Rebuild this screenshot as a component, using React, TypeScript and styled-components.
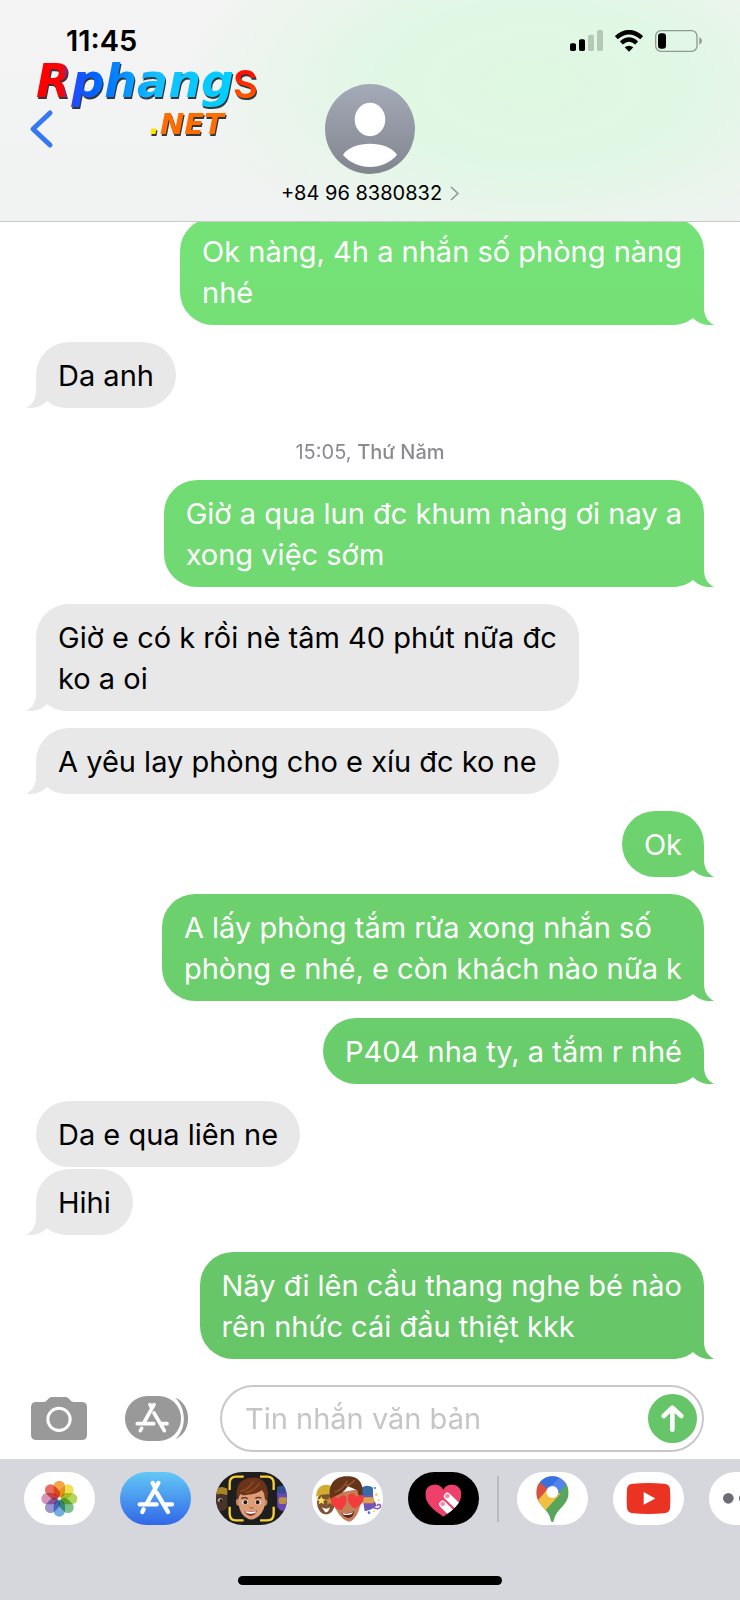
import React from "react";
import styled, { createGlobalStyle, css } from "styled-components";

const GlobalStyle = createGlobalStyle`
  * { box-sizing: border-box; }
  body {
    margin: 0;
    background: #fff;
    color: #000;
    font-family: Inter, "Noto Sans", sans-serif;
  }
  button { border: 0; padding: 0; background: none; font: inherit; color: inherit; cursor: pointer; }
  svg { display: block; }
`;

const Page = styled.div`
  display: flex;
  flex-direction: column;
  min-height: 100vh;
  overflow-x: hidden;
`;

const Header = styled.header`
  position: relative;
  z-index: 1;
  padding-bottom: 16px;
  border-bottom: 1px solid #c8cac9;
  background:
    radial-gradient(ellipse 48% 85% at 72% 38%, #dff8e1 0%, #e1f7e5 45%, rgba(232, 245, 234, 0.7) 75%, rgba(240, 243, 241, 0) 100%),
    linear-gradient(#f4f4f4, #f1f2f2);
`;

const StatusBar = styled.div`
  display: flex;
  justify-content: space-between;
  align-items: center;
  height: 84px;
  padding: 0 38px 3px 66px;
`;

const Clock = styled.time`
  font-size: 29px;
  font-weight: 600;
  line-height: 32px;
`;

const StatusIcons = styled.div`
  display: flex;
  align-items: center;
  gap: 12px;
`;

const NavBar = styled.div`
  display: grid;
  grid-template-columns: 1fr auto 1fr;
`;

const BackButton = styled.button`
  justify-self: start;
  align-self: start;
  height: 90px;
  padding: 0 29px;
`;

const Contact = styled.button`
  display: flex;
  flex-direction: column;
  align-items: center;
  gap: 8px;
`;

const ContactName = styled.span`
  display: flex;
  align-items: center;
  gap: 8px;
  font-size: 20px;
  line-height: 23px;
`;

const Watermark = styled.div`
  position: absolute;
  left: 34px;
  top: 50px;
  pointer-events: none;
  filter: drop-shadow(1px 2px 0 #34363c);
`;

const Thread = styled.main`
  display: flex;
  flex-direction: column;
  flex: 1;
  margin-top: -4px;
  padding: 0 36px;
`;

type Side = "in" | "out";

const Bubble = styled.p<{ $side: Side; $tail: boolean }>`
  position: relative;
  align-self: ${(p) => (p.$side === "out" ? "flex-end" : "flex-start")};
  max-width: 84%;
  margin: 0 0 ${(p) => (p.$tail ? 17 : 2)}px;
  padding: 13px 22px 12px;
  border-radius: 33px;
  font-size: 29px;
  line-height: 41px;
  white-space: pre-line;
  ${(p) =>
    p.$side === "out"
      ? css`
          color: #fff;
          background: linear-gradient(#78e87a, #63bf64) fixed;
        `
      : css`
          color: #000;
          background: #e8e8e9;
        `}
  ${(p) =>
    p.$tail &&
    css`
      &::after {
        content: "";
        position: absolute;
        bottom: 0;
        width: 44px;
        height: 32px;
        background: inherit;
        ${p.$side === "out"
          ? css`
              right: -10px;
              clip-path: path("M34 0 V14 C34 23 37 28 44 32 C37 33 29 31 23 25 C17 30 10 32 0 32 L0 28 L20 20 L24 0 Z");
            `
          : css`
              left: -10px;
              clip-path: path("M10 0 V14 C10 23 7 28 0 32 C7 33 15 31 21 25 C27 30 34 32 44 32 L44 28 L24 20 L20 0 Z");
            `}
      }
    `}
`;

const Stamp = styled.p`
  margin: 15px 0;
  text-align: center;
  font-size: 20px;
  line-height: 25px;
  color: #8b8b8f;
  b { font-weight: 500; }
`;

const Composer = styled.form`
  display: flex;
  align-items: center;
  gap: 32px;
  padding: 9px 36px 7px 31px;
`;

const ToolButton = styled.button`
  flex: none;
  margin-right: 6px;
  & + & { margin-right: 0; }
`;

const Field = styled.div`
  display: flex;
  align-items: center;
  flex: 1;
  min-width: 0;
  height: 67px;
  padding: 0 5px 0 23px;
  border: 2px solid #c8c8ca;
  border-radius: 34px;
`;

const TextBox = styled.input`
  flex: 1;
  min-width: 0;
  padding: 0;
  border: 0;
  outline: 0;
  background: none;
  font: 29px/41px Inter, "Noto Sans", sans-serif;
  &::placeholder { color: #c5c5c7; opacity: 1; }
`;

const SendButton = styled.button`
  flex: none;
`;

const Drawer = styled.footer`
  height: 141px;
  padding-top: 13px;
  background: #d5d7dc;
  overflow: hidden;
`;

const AppStrip = styled.nav`
  display: flex;
  align-items: center;
  gap: 25px;
  padding-left: 24px;
`;

const AppButton = styled.button<{ $bg: string }>`
  flex: none;
  width: 71px;
  height: 53px;
  border-radius: 27px;
  overflow: hidden;
  background: ${(p) => p.$bg};
`;

const Divider = styled.span`
  flex: none;
  width: 2px;
  height: 46px;
  margin: 0 -7px;
  background: #b9bbc0;
`;

const HomeBar = styled.div`
  width: 264px;
  height: 9px;
  margin: 51px auto 0;
  border-radius: 5px;
  background: #000;
`;

interface Message {
  side: Side;
  text: string;
  noTail?: boolean;
}

const earlier: Message[] = [
  { side: "out", text: "Ok nàng, 4h a nhắn số phòng nàng\nnhé" },
  { side: "in", text: "Da anh" },
];

const thursday: Message[] = [
  { side: "out", text: "Giờ a qua lun đc khum nàng ơi nay a\nxong việc sớm" },
  { side: "in", text: "Giờ e có k rồi nè tâm 40 phút nữa đc\nko a oi" },
  { side: "in", text: "A yêu lay phòng cho e xíu đc ko ne" },
  { side: "out", text: "Ok" },
  { side: "out", text: "A lấy phòng tắm rửa xong nhắn số\nphòng e nhé, e còn khách nào nữa k" },
  { side: "out", text: "P404 nha ty, a tắm r nhé" },
  { side: "in", text: "Da e qua liên ne", noTail: true },
  { side: "in", text: "Hihi" },
  { side: "out", text: "Nãy đi lên cầu thang nghe bé nào\nrên nhức cái đầu thiệt kkk" },
];

const Messages = ({ items }: { items: Message[] }) => (
  <>
    {items.map((m) => (
      <Bubble key={m.text} $side={m.side} $tail={!m.noTail}>
        {m.text}
      </Bubble>
    ))}
  </>
);

const SignalIcon = () => (
  <svg width="33" height="21" viewBox="0 0 99 63" aria-label="Signal">
    <rect x="0" y="40" width="18" height="23" rx="5" />
    <rect x="27" y="28" width="18" height="35" rx="5" />
    <rect x="54" y="14" width="18" height="49" rx="5" fill="#b5c9b9" />
    <rect x="81" y="0" width="18" height="63" rx="5" fill="#b5c9b9" />
  </svg>
);

const WifiIcon = () => (
  <svg width="28" height="22" viewBox="0 0 84 66" aria-label="Wi-Fi">
    <g fill="none" stroke="#000" strokeWidth="13">
      <path d="M4 23 Q42 -10 80 23" />
      <path d="M19 39 Q42 18 65 39" />
    </g>
    <path d="M29 52 Q42 42 55 52 L42 65 Z" />
  </svg>
);

const BatteryIcon = () => (
  <svg width="47" height="22" viewBox="0 0 141 66" aria-label="Battery">
    <rect x="2" y="2" width="124" height="62" rx="16" fill="none" stroke="#8d9b90" strokeWidth="4" />
    <rect x="9" y="10" width="24" height="46" rx="9" />
    <path d="M133 22 Q141 26 141 33 Q141 40 133 44 Z" fill="#8d9b90" />
  </svg>
);

const Avatar = () => (
  <svg width="90" height="90" viewBox="0 0 90 90" aria-hidden="true">
    <defs>
      <linearGradient id="avatar" x1="0" y1="0" x2="0" y2="1">
        <stop offset="0" stopColor="#a5aab8" />
        <stop offset="1" stopColor="#81858e" />
      </linearGradient>
    </defs>
    <circle cx="45" cy="45" r="45" fill="url(#avatar)" />
    <ellipse cx="45" cy="35.500" rx="15.300" ry="16.700" fill="#fff" />
    <path d="M18 71 C27 56 63 56 72 71 C58 87 32 87 18 71 Z" fill="#fff" />
  </svg>
);

const Logo = () => (
  <svg width="230" height="98" viewBox="0 0 230 98" overflow="visible" role="img" aria-label="Rphangs.NET">
    <defs>
      <linearGradient id="brand" gradientUnits="userSpaceOnUse" x1="3" y1="0" x2="202" y2="0">
        <stop offset="0" stopColor="#ff0000" />
        <stop offset="0.12" stopColor="#ff0000" />
        <stop offset="0.19" stopColor="#1f4dff" />
        <stop offset="0.3" stopColor="#0066ff" />
        <stop offset="0.6" stopColor="#12c0ff" />
        <stop offset="1" stopColor="#00cfff" />
      </linearGradient>
      <linearGradient id="ess" x1="0" y1="0" x2="0" y2="1">
        <stop offset="0.3" stopColor="#ff1000" />
        <stop offset="1" stopColor="#ff7a00" />
      </linearGradient>
    </defs>
    <g fontFamily="DejaVu Sans" fontWeight="700" fontStyle="italic">
      <text x="2" y="47" fontSize="46" fill="url(#brand)">
        Rphang
      </text>
      <text x="115" y="84" fontSize="29" fill="#ff6d00">
        <tspan fill="#ffe600">.</tspan>NET
      </text>
    </g>
    <text x="199" y="48" fontFamily="Inter" fontWeight="600" fontSize="38" fill="url(#ess)">
      S
    </text>
  </svg>
);

const CameraIcon = () => (
  <svg width="56" height="43" viewBox="0 0 168 129" aria-hidden="true">
    <path
      d="M16 15 H38 Q44 15 48 10 L52 5 Q56 0 62 0 H104 Q110 0 114 5 L118 10 Q122 15 128 15 H152 Q168 15 168 31 V113 Q168 129 152 129 H16 Q0 129 0 113 V31 Q0 15 16 15 Z"
      fill="#999"
    />
    <circle cx="84" cy="67" r="33.500" fill="none" stroke="#fff" strokeWidth="9" />
  </svg>
);

const AppsIcon = () => (
  <svg width="63" height="45" viewBox="0 0 189 135" aria-hidden="true">
    <rect width="168" height="135" rx="67" fill="#999" />
    <path d="M151 5 C202 25 202 110 151 130 C185 98 185 38 151 5 Z" fill="#999" />
    <g stroke="#fff" strokeWidth="11" strokeLinecap="round">
      <path d="M87 26 L58 78 M75 26 L80 35 M50 97 L46 104 M37 83 H86 M106 83 H126 M87 51 L118 104" />
    </g>
  </svg>
);

const SendIcon = () => (
  <svg width="49" height="49" viewBox="0 0 147 147" aria-hidden="true">
    <circle cx="73.500" cy="73.500" r="73.500" fill="#66c568" />
    <path
      d="M73 107 V42 M47 66 L73 41 L100 66"
      fill="none"
      stroke="#fff"
      strokeWidth="14"
      strokeLinecap="round"
      strokeLinejoin="round"
    />
  </svg>
);

const AppArt = ({ children }: { children: React.ReactNode }) => (
  <svg width="71" height="53" viewBox="0 0 213 159" aria-hidden="true">
    {children}
  </svg>
);

const petals = ["#f29a2e", "#f0dc3c", "#a9cf46", "#67b97c", "#5fa3dc", "#8f86cc", "#cd86b0", "#e6564a"];

const Petal = styled.rect`
  mix-blend-mode: multiply;
  opacity: 0.88;
`;

const PhotosArt = () => (
  <AppArt>
    <g transform="translate(106 80)">
      {petals.map((c, i) => (
        <Petal key={c} x="-17" y="-54" width="34" height="50" rx="17" fill={c} transform={`rotate(${i * 45})`} />
      ))}
    </g>
  </AppArt>
);

const StoreArt = () => (
  <AppArt>
    <g stroke="#fff" strokeWidth="13" strokeLinecap="round">
      <path d="M115 33 L79 97 M98 33 L104 44 M71 112 L67 120 M59 97 H110 M134 97 H156 M110 62 L144 120" />
    </g>
  </AppArt>
);

const BoyFace = () => (
  <>
    <ellipse cx="67" cy="90" rx="7" ry="11" fill="#c98560" />
    <ellipse cx="147" cy="90" rx="7" ry="11" fill="#c98560" />
    <path d="M68 58 Q105 28 146 58 L147 98 Q141 126 120 138 Q105 147 92 138 Q72 126 68 98 Z" fill="#dc9d77" />
    <path d="M63 84 C56 38 76 18 108 17 C144 14 162 44 154 86 L147 82 Q148 66 138 54 Q120 68 94 68 Q80 72 73 66 Q68 76 63 84 Z" fill="#6b3418" />
    <path d="M74 58 Q96 54 112 28 M88 62 Q116 56 130 34" fill="none" stroke="#8d4b25" strokeWidth="5" />
  </>
);

const MemojiArt = () => (
  <AppArt>
    <path d="M-6 60 Q22 58 34 72 V104 Q24 124 0 114 Z" fill="#4a3328" />
    <path d="M-2 66 Q6 34 34 50 V70 Q16 62 -2 68 Z" fill="#a98424" />
    <ellipse cx="13" cy="85" rx="7" ry="6" fill="#ccc" />
    <circle cx="15" cy="86" r="5" fill="#221" />
    <path d="M183 48 Q200 36 213 46 V112 Q196 124 184 104 Z" fill="#6a48b4" />
    <path d="M183 46 Q196 36 213 46 V62 Q196 68 183 60 Z" fill="#31508f" />
    <rect x="188" y="76" width="25" height="20" rx="5" fill="#bd9048" />
    <BoyFace />
    <path d="M76 80 Q86 74 95 80 M118 79 Q128 73 136 79" fill="none" stroke="#5a2e18" strokeWidth="4" />
    <ellipse cx="87" cy="91" rx="9" ry="6" fill="#fff" />
    <ellipse cx="126" cy="91" rx="9" ry="6" fill="#fff" />
    <circle cx="88" cy="91" r="6" fill="#2b1a12" />
    <circle cx="125" cy="91" r="6" fill="#2b1a12" />
    <path d="M100 106 Q106 111 113 106" fill="none" stroke="#b96f4c" strokeWidth="4" />
    <path d="M85 117 Q105 123 123 115 Q120 131 104 132 Q91 130 85 117 Z" fill="#8c2f2c" />
    <path d="M88 118 Q105 123 121 117 L118 123 Q104 127 91 123 Z" fill="#fff" />
    <path
      d="M41 54 V34 Q41 14 61 14 H83 M132 14 H153 Q173 14 173 34 V54 M173 104 V125 Q173 145 153 145 H132 M83 145 H61 Q41 145 41 125 V104"
      fill="none"
      stroke="#fbd035"
      strokeWidth="7"
    />
  </AppArt>
);

const heart = "M0 22 C-34 2 -26 -24 -10 -22 Q-2 -21 0 -12 Q4 -22 14 -21 C30 -18 28 6 0 22 Z";
const star = "M0 -12 L4 -4 L13 -3 L6 3 L8 12 L0 7 L-8 12 L-6 3 L-13 -3 L-4 -4 Z";

const StickersArt = () => (
  <AppArt>
    <ellipse cx="42" cy="92" rx="27" ry="35" fill="#805334" />
    <path d="M12 74 Q14 38 44 38 Q68 38 70 70 Q40 62 12 74 Z" fill="#d2ac2f" />
    <path d={star} transform="translate(28 85)" fill="#ffe05e" />
    <path d={star} transform="translate(53 86)" fill="#c59635" />
    <path d="M29 106 Q44 114 54 106 Q50 122 40 121 Z" fill="#fff" />
    <path d="M148 52 Q166 34 183 50 L184 84 Q194 94 192 102 Q184 112 158 118 Z" fill="#6f56b8" />
    <path d="M150 46 Q164 36 182 46 V70 H150 Z" fill="#356ba9" />
    <rect x="150" y="76" width="36" height="18" rx="5" fill="#e3a148" />
    <path d="M182 106 Q204 116 206 102 Q202 92 194 102" fill="none" stroke="#895db7" strokeWidth="5" />
    <g fill="#ffc935">
      <circle cx="193" cy="68" r="4" />
      <circle cx="186" cy="118" r="3" />
      <circle cx="200" cy="85" r="3" />
    </g>
    <g fill="#3b76ed">
      <circle cx="189" cy="48" r="3" />
      <circle cx="171" cy="122" r="4" />
    </g>
    <path d="M62 65 L146 50 Q150 100 136 126 Q122 150 110 149 Q90 143 76 119 Q62 100 62 65 Z" fill="#c47f59" />
    <path d="M56 82 C44 38 70 12 104 13 C148 12 158 42 149 86 Q140 76 136 55 Q116 46 108 43 Q90 68 70 72 Q62 80 64 91 Z" fill="#653519" />
    <path d="M68 60 Q92 54 106 26 M102 42 Q120 36 128 24" fill="none" stroke="#935331" strokeWidth="5" />
    <path d={heart} transform="translate(82 93) rotate(-12)" fill="#f23d3c" />
    <path d={heart} transform="translate(130 88) rotate(8)" fill="#f23d3c" />
    <path d="M88 122 Q108 128 126 118 Q125 136 110 138 Q96 136 88 122 Z" fill="#611f1c" />
    <path d="M91 123 Q108 128 123 120 L120 126 Q108 131 95 128 Z" fill="#fff" />
  </AppArt>
);

const TouchArt = () => (
  <AppArt>
    <defs>
      <clipPath id="heartClip">
        <path d="M106 134 C72 112 52 92 52 67 C52 36 91 27 106 53 C121 27 160 36 160 67 C160 92 140 112 106 134 Z" />
      </clipPath>
    </defs>
    <g clipPath="url(#heartClip)">
      <rect width="213" height="159" fill="#ed416c" />
      <g stroke="#fff" strokeWidth="21" strokeLinecap="round">
        <path d="M118 73 L158 111 M104 97 L140 133" />
      </g>
      <g fill="#f18ba6">
        <circle cx="118" cy="72" r="7" />
        <circle cx="104" cy="96" r="7" />
      </g>
    </g>
  </AppArt>
);

const MapsArt = () => (
  <AppArt>
    <defs>
      <clipPath id="pinClip">
        <path d="M106 150 C101 150 101 139 97 131 C87 109 58 94 58 62 A48.500 49 0 0 1 155 62 C155 94 125 109 115 131 C111 139 111 150 106 150 Z" />
      </clipPath>
    </defs>
    <g clipPath="url(#pinClip)">
      <rect width="213" height="159" fill="#58a55c" />
      <path d="M50 16 L70 28 L106 58 L62 98 L50 98 Z" fill="#d95140" />
      <path d="M98 44 L130 65 L80 121 L62 98 L60 88 Z" fill="#f2bf42" />
      <path d="M68 30 L80 0 H160 L148 36 L118 72 L94 50 Z" fill="#5383ec" />
      <path d="M68 30 L80 0 H142 L94 52 Z" fill="#3871e0" />
    </g>
    <circle cx="106" cy="60" r="18" fill="#fff" />
  </AppArt>
);

const YouTubeArt = () => (
  <AppArt>
    <path d="M60 35 Q106 31 153 35 Q170 36 171 52 Q173 80 171 108 Q170 123 153 124 Q106 128 60 124 Q43 123 42 108 Q40 80 42 52 Q43 36 60 35 Z" fill="#ea3323" />
    <path d="M92 60 L127 79.500 L92 98 Z" fill="#fff" />
  </AppArt>
);

const MoreArt = () => (
  <AppArt>
    <g fill="#6c6c74">
      <circle cx="58" cy="79" r="16" />
      <circle cx="106" cy="79" r="16" />
      <circle cx="154" cy="79" r="16" />
    </g>
  </AppArt>
);

export default function App() {
  return (
    <Page>
      <GlobalStyle />
      <Header>
        <StatusBar>
          <Clock>11:45</Clock>
          <StatusIcons>
            <SignalIcon />
            <WifiIcon />
            <BatteryIcon />
          </StatusIcons>
        </StatusBar>
        <NavBar>
          <BackButton type="button" aria-label="Quay lại">
            <svg width="26" height="40" viewBox="0 0 26 40">
              <path
                d="M21 4 L4 20 L21 36"
                fill="none"
                stroke="#3478f6"
                strokeWidth="5"
                strokeLinecap="round"
                strokeLinejoin="round"
              />
            </svg>
          </BackButton>
          <Contact type="button">
            <Avatar />
            <ContactName>
              +84 96 8380832
              <svg width="9" height="15" viewBox="0 0 9 15" aria-hidden="true">
                <path d="M1 1 L8 7.500 L1 14" fill="none" stroke="#8f9299" strokeWidth="1.500" />
              </svg>
            </ContactName>
          </Contact>
        </NavBar>
        <Watermark>
          <Logo />
        </Watermark>
      </Header>

      <Thread>
        <Messages items={earlier} />
        <Stamp>
          15:05, <b>Thứ Năm</b>
        </Stamp>
        <Messages items={thursday} />
      </Thread>

      <Composer onSubmit={(e) => e.preventDefault()}>
        <ToolButton type="button" aria-label="Máy ảnh">
          <CameraIcon />
        </ToolButton>
        <ToolButton type="button" aria-label="Ứng dụng">
          <AppsIcon />
        </ToolButton>
        <Field>
          <TextBox type="text" placeholder="Tin nhắn văn bản" aria-label="Tin nhắn văn bản" />
          <SendButton type="submit" aria-label="Gửi">
            <SendIcon />
          </SendButton>
        </Field>
      </Composer>

      <Drawer>
        <AppStrip>
          <AppButton type="button" aria-label="Ảnh" $bg="#fff">
            <PhotosArt />
          </AppButton>
          <AppButton type="button" aria-label="App Store" $bg="linear-gradient(#62c8f5, #3267e8)">
            <StoreArt />
          </AppButton>
          <AppButton type="button" aria-label="Memoji" $bg="#1e1e1e">
            <MemojiArt />
          </AppButton>
          <AppButton type="button" aria-label="Nhãn dán" $bg="#fff">
            <StickersArt />
          </AppButton>
          <AppButton type="button" aria-label="Digital Touch" $bg="#000">
            <TouchArt />
          </AppButton>
          <Divider />
          <AppButton type="button" aria-label="Google Maps" $bg="#fff">
            <MapsArt />
          </AppButton>
          <AppButton type="button" aria-label="YouTube" $bg="#fff">
            <YouTubeArt />
          </AppButton>
          <AppButton type="button" aria-label="Thêm" $bg="#fff">
            <MoreArt />
          </AppButton>
        </AppStrip>
        <HomeBar />
      </Drawer>
    </Page>
  );
}
